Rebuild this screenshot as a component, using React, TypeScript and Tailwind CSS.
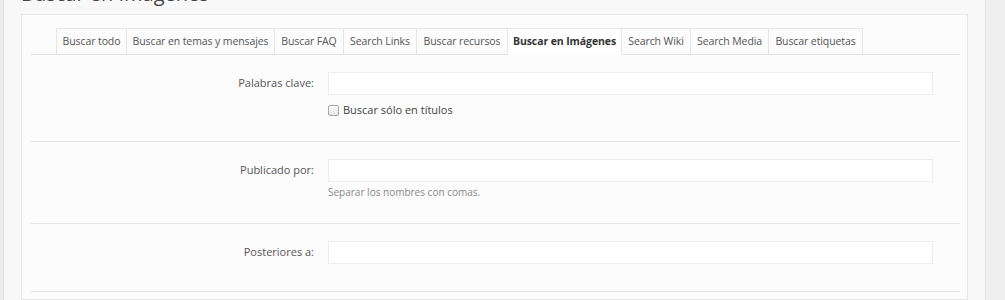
const tabs = [
  { label: "Buscar todo", w: "w-[71px]" },
  { label: "Buscar en temas y mensajes", w: "w-[148px]" },
  { label: "Buscar FAQ", w: "w-[69px]" },
  { label: "Search Links", w: "w-[73px]" },
  { label: "Buscar recursos", w: "w-[91px]" },
  { label: "Buscar en Imágenes", w: "w-[114px]" },
  { label: "Search Wiki", w: "w-[69px]" },
  { label: "Search Media", w: "w-[78px]" },
  { label: "Buscar etiquetas", w: "w-[94px]" },
];

const ACTIVE = "Buscar en Imágenes";

function TextInput() {
  return <div className="h-[23px] w-[605px] border border-[#ededed] bg-white" />;
}

function FormRow({
  label,
  children,
  bottom,
}: {
  label: string;
  children?: React.ReactNode;
  bottom: string;
}) {
  return (
    <div className={`flex border-b border-[#e6e6e6] pt-[17px] ${bottom}`}>
      <div className="flex h-[23px] w-[283px] items-center justify-end text-[11px] text-[#555]">
        {label}
      </div>
      <div className="ml-[14px] flex flex-col">
        <TextInput />
        {children}
      </div>
    </div>
  );
}

export default function App() {
  return (
    <div
      className="flex h-[300px] w-[1005px] overflow-hidden bg-[#f8f8f8]"
      style={{ fontFamily: '"Open Sans", "Noto Sans", sans-serif' }}
    >
      <div className="w-[4px] shrink-0 border-r border-[#e3e3e3] bg-[#ececec]" />
      <div className="flex w-[981px] shrink-0 flex-col pl-[17px]">
        <h1 className="mt-[-16px] h-[30px] text-[20px] leading-[20px] font-normal text-[#444]">
          Buscar en Imágenes
        </h1>
        <div className="w-[947px] flex-1 border border-[#e6e6e6] bg-[#fcfcfc] pt-[13px] pr-[7px] pl-[9px]">
          <div className="flex border-b border-[#e4e4e4] pl-[25px]">
            {tabs.map((t, i) => {
              const active = t.label === ACTIVE;
              return (
                <div
                  key={t.label}
                  className={`mb-[-1px] flex h-[27px] shrink-0 items-center justify-center border-t border-r border-[#e6e6e6] text-[10.5px] tracking-[-0.1px] ${t.w} ${
                    i === 0 ? "border-l" : ""
                  } ${
                    active
                      ? "border-b border-b-white bg-white font-bold text-[#333]"
                      : "border-b border-b-[#e4e4e4] bg-[#fcfcfc] text-[#555]"
                  }`}
                >
                  {t.label}
                </div>
              );
            })}
          </div>

          <FormRow label="Palabras clave:" bottom="pb-[21px]">
            <label className="mt-[5px] flex h-[20px] items-center gap-[4px] text-[11px] text-[#444]">
              <span className="h-[11px] w-[11px] rounded-[2px] border border-[#a9a9a9] bg-gradient-to-b from-[#fafafa] to-[#e6e6e6]" />
              Buscar sólo en títulos
            </label>
          </FormRow>

          <FormRow label="Publicado por:" bottom="pb-[23px]">
            <div className="mt-[2px] h-[16px] text-[10px] leading-[16px] text-[#888]">
              Separar los nombres con comas.
            </div>
          </FormRow>

          <FormRow label="Posteriores a:" bottom="pb-[27px]" />
        </div>
      </div>
      <div className="flex-1 border-l border-[#e3e3e3] bg-[#efefef]" />
    </div>
  );
}
